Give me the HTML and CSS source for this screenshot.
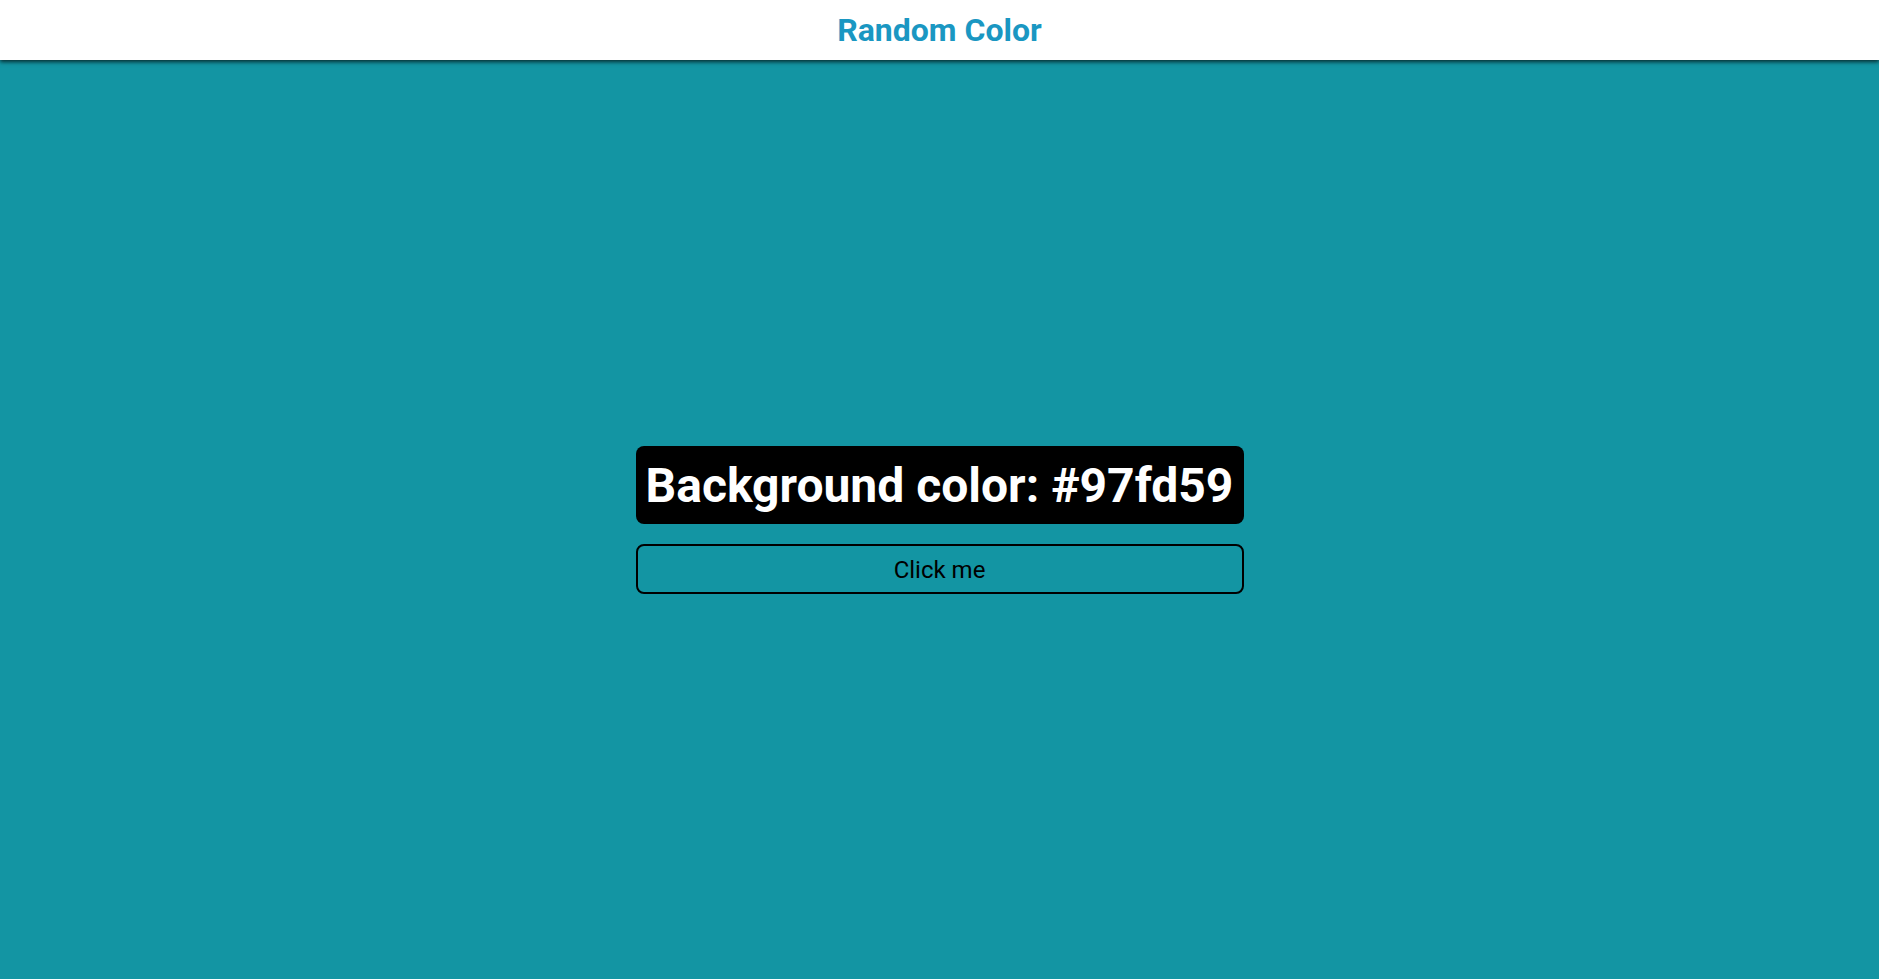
FILE: index.html
```html
<!DOCTYPE html>
<html>
<head>
<meta charset="utf-8">
<link rel="stylesheet" href="styles.css">
</head>
<body>
<header class="topbar"><h1 class="title">Random Color</h1></header>
<main class="stage">
  <div class="panel">
    <div class="label">Background color: #97fd59</div>
    <button class="btn">Click me</button>
  </div>
</main>
</body>
</html>
```
FILE: styles.css
```css
html, body { margin: 0; padding: 0; height: 100%; }
body {
  background: #1395a3;
  font-family: Roboto, "Liberation Sans", sans-serif;
  display: flex;
  flex-direction: column;
}
.topbar {
  height: 60px;
  background: #fff;
  display: flex;
  align-items: center;
  justify-content: center;
  box-shadow: 0 2px 4px rgba(0,0,0,0.7);
  position: relative;
  z-index: 1;
  flex: none;
}
.title {
  margin: 0;
  font-size: 32px;
  font-weight: 700;
  color: #1a97c2;
}
.stage {
  flex: 1;
  display: flex;
  align-items: center;
  justify-content: center;
}
.panel {
  width: 608px;
  display: flex;
  flex-direction: column;
  gap: 20px;
}
.label {
  background: #000;
  color: #fff;
  border-radius: 8px;
  height: 78px;
  box-sizing: border-box;
  padding-top: 2px;
  display: flex;
  align-items: center;
  justify-content: center;
  font-size: 48px;
  font-weight: 700;
  white-space: nowrap;
}
.btn {
  height: 50px;
  padding: 2px 0 0;
  background: transparent;
  border: 2px solid #000;
  border-radius: 8px;
  font-family: Roboto, "Liberation Sans", sans-serif;
  font-size: 24px;
  color: #000;
  cursor: pointer;
}
```
